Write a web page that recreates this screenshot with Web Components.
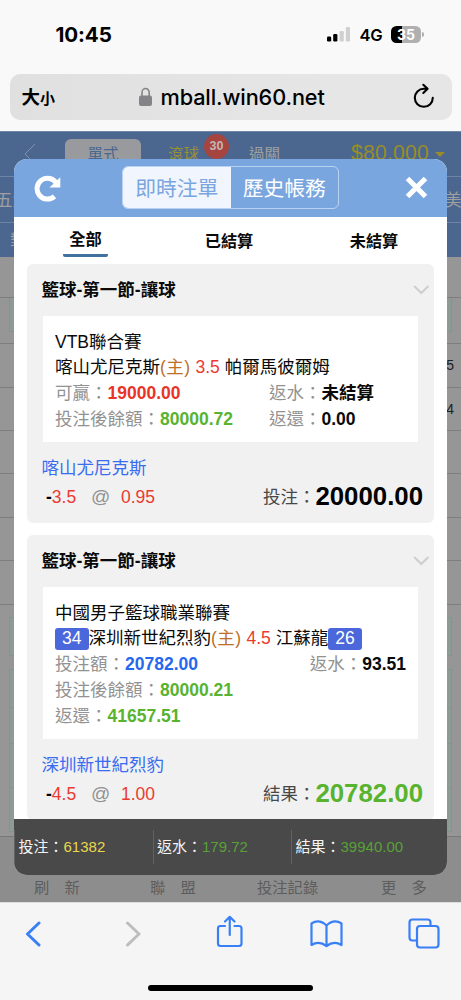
<!DOCTYPE html>
<html lang="zh-Hant">
<head>
<meta charset="utf-8">
<title>mball.win60.net</title>
<style>
html,body{margin:0;height:100%;overflow:hidden}
body{font-family:"Liberation Sans","Noto Sans CJK TC",sans-serif;background:#f9f9f9;color:#0a0a0a}
</style>
</head>
<body>
<phone-screen></phone-screen>
<script>
function define(name, html, after) {
  const t = document.createElement('template');
  t.innerHTML = '<style>*{box-sizing:border-box}:host{display:block;box-sizing:border-box}</style>' + html;
  customElements.define(name, class extends HTMLElement {
    constructor() {
      super();
      this.attachShadow({mode: 'open'}).append(t.content.cloneNode(true));
    }
    connectedCallback() { if (after) after(this, this.shadowRoot); }
  });
}

define('status-bar', `
<style>
:host{height:74px;display:flex;align-items:flex-start;padding:22px 37.5px 0 55.5px;font-family:Inter,sans-serif;color:#000}
.time{font-weight:700;font-size:20.6px;line-height:25px;letter-spacing:-.1px;flex:1}
.sig{margin:5px 8px 0 0}.net{font-size:16.6px;font-weight:600;line-height:26px;margin-right:8.5px;letter-spacing:-.2px}
.bat{display:flex;align-items:center;margin-top:4px}
.body{width:30px;height:17px;border-radius:5.5px;background:linear-gradient(90deg,#000 10.5px,#b0b0b0 10.5px);color:#fff;font-weight:700;font-size:14px;line-height:17px;text-align:center}
.tip{width:1.5px;height:5px;border-radius:0 2px 2px 0;background:#b0b0b0;margin-left:1px}
</style>
<span class="time">10:45</span>
<svg class="sig" width="24" height="15" viewBox="0 0 24 15"><rect x="0" y="9.5" width="4.2" height="5" rx="1.2"/><rect x="6.2" y="7" width="4.2" height="7.500" rx="1.2"/><rect x="12.6" y="4" width="4.2" height="10.5" rx="1.2" fill="#d0d0d0"/><rect x="18.8" y="0" width="4.2" height="14.5" rx="1.2" fill="#d0d0d0"/></svg>
<span class="net">4G</span><span class="bat"><span class="body">35</span><span class="tip"></span></span>`);

define('address-bar', `
<style>
:host{height:57px;padding:0 9px 0 9.5px}
.bar{height:45.5px;border-radius:10px;background:linear-gradient(90deg,#e0e0e0,#e6e6e6 75%);display:flex;align-items:center;color:#000;padding:0 17px 0 12px}
.size{width:116px;font:700 18.5px/44px "Noto Sans CJK TC",sans-serif}
.size small{font-size:15px}
.url{font:500 21.7px/44px Inter,sans-serif;margin-left:8px;flex:1;letter-spacing:-.12px}
</style>
<div class="bar"><span class="size">大<small>小</small></span>
<svg width="14" height="20" viewBox="0 0 14 20" style="margin-left:1px"><rect x="0" y="8.5" width="13" height="10.5" rx="2" fill="#848488"/><path d="M3 9V5.5a3.6 4 0 0 1 7.2 0V9" fill="none" stroke="#848488" stroke-width="1.6"/></svg>
<span class="url">mball.win60.net</span>
<svg width="22" height="26" viewBox="0 0 22 26" fill="none" stroke="#000" stroke-width="2.1" stroke-linecap="round" stroke-linejoin="round" style="margin-top:-2px"><path d="M19.8 14.8A9 9 0 1 1 10.8 5.8h3.7M10.3 1.8l4.3 4-4.3 4.2"/></svg></div>`);

define('app-backdrop', `
<style>
:host{height:771px;background:#969696;border-top:1px solid #6d87a5;overflow:hidden;display:flex;flex-direction:column;color:#a0a0a0}
.nav{background:#4b678f;height:125px;flex:none}
.top{height:45px;display:flex;border-bottom:1px solid #6d84a6;align-items:flex-start;font-size:15.5px}
.top>*{flex:none}
.back{margin:11px 0 0 24px}.on{width:76px;height:40px;background:#989a9d;border-radius:6px;margin:7px 0 0 29px;text-align:center;line-height:31px;color:#4b678f}
.live{margin:11px 0 0 27px;color:#988f32;width:36px;line-height:24px}
.n{width:25px;height:25px;border-radius:50%;background:#a6443f;color:#c4b6b6;font:700 12.5px/25px "Liberation Sans";text-align:center;margin:2px 0 0 0}
.pass{margin:11px 0 0 20px;line-height:24px}.cash{font-size:21.2px;line-height:24px;color:#988d28;margin:8.500px 0 0 71px;letter-spacing:.2px}
.tri{margin:20px 0 0 6px;border:5px solid transparent;border-top-color:#988d28}
.mid{height:46px;border-bottom:1px solid #6d84a6;display:flex;justify-content:space-between;font-size:16.5px;line-height:46px;white-space:nowrap}
.mid span:first-child{margin-left:-4px}.mid span:last-child{width:16px}
.low{font-size:15px;line-height:34px;padding-left:10px}
.row{flex:none;border-bottom:1px solid #7e7e7e;text-align:right;padding-right:7px;color:#202020;font-size:14px}
.box{flex:none;margin:0 9px;border:1.5px solid #7b998e;background:#8d9a95}
.box i{display:block;border-bottom:1px solid #7b998e}
.foot{margin-top:4px;border-top:1px solid #787878;background:#8d8d8d;flex:1;padding-top:39px;display:flex;font-size:15.3px;line-height:24px;color:#5d5d5d;white-space:pre}
</style>
<div class="nav"><div class="top">
<svg class="back" width="12" height="22" viewBox="0 0 12 22" fill="none" stroke="#8193aa"><path d="M11 1 1 11l10 10"/></svg>
<span class="on">單式</span><span class="live">滾球</span><span class="n">30</span><span class="pass">過關</span><span class="cash">$80,000</span><i class="tri"></i></div>
<div class="mid"><span>五大</span><span>美足</span></div><div class="low">對</div></div>
<div class="row" style="height:41px"></div>
<div class="row" style="height:46px;padding:0"><div class="box" style="height:34px;border-top:0"></div></div>
<div class="row" style="height:44px;line-height:43px">5</div>
<div class="row" style="height:43px;line-height:43px">4</div>
<div class="row" style="height:43px"></div><div class="row" style="height:44px"></div><div class="row" style="height:43px"></div><div class="row" style="height:44px"></div>
<div class="box" style="height:39px;margin-top:12px"></div>
<div class="box" style="height:163px;margin-top:13px"><i style="height:38px"></i><i style="height:36px"></i><i style="height:44px"></i></div>
<div class="foot"><span style="width:116px;padding-left:34px">刷&#12288;新</span><span style="width:141px;padding-left:34px">聯&#12288;盟</span><span style="width:124px">投注記錄</span><span>更&#12288;多</span></div>`);

define('bet-head', `
<style>
:host{height:58px;background:#7aa6df;display:grid;grid-template-columns:108px 217px 1fr;align-items:center;color:#fff}
.re{margin:0 0 0 20px}.seg{height:43px;border:1px solid #b9d2ef;border-radius:6px;display:flex;font-size:20.8px;line-height:43px;text-align:center;overflow:hidden}
.seg span{flex:1}.seg span:first-child{background:#f1f5fd;color:#7aa6df}.x{justify-self:end;margin-right:19px}
</style>
<svg class="re" width="28" height="28" viewBox="0 0 28 28"><path d="M20.500 22.300A10.400 10.400 0 1 1 22.500 9.500" fill="none" stroke="#fff" stroke-width="5"/><path d="M26.300 3.200v10.300H15.500z" fill="#fff"/></svg>
<div class="seg"><span>即時注單</span><span>歷史帳務</span></div>
<svg class="x" width="23" height="23" viewBox="0 0 23 23" stroke="#fff" stroke-width="5"><path d="m2.500 2.500 18 18M20.500 2.500 2.500 20.500"/></svg>`);

define('bet-tabs', `
<style>
:host{height:47px;display:grid;grid-template-columns:143px 144px 146px;justify-items:center;font-weight:700;font-size:16.2px;line-height:26px}
span{margin-top:11px}.on{margin-top:8px;height:32.500px;width:44.5px;text-align:center;line-height:28px;border-bottom:3.5px solid #41719f;border-radius:0 0 2px 2px}
</style><span class="on">全部</span><span>已結算</span><span>未結算</span>`);

define('bet-card', `
<style>
:host{width:407px;background:#f1f1f1;border-radius:6px;margin:0 0 12px 13px;padding:0 16px 0 15px;font-size:17.5px}
.t{height:52px;display:flex;align-items:center;justify-content:space-between;font-weight:700;margin:0 -12px 0 -.5px;line-height:52px;padding-top:1px}
.t svg{margin-top:-1px}
.b{background:#fff;margin-left:1px;padding:14px 12px 9.5px;line-height:25.8px}
.f{display:flex;flex-wrap:wrap;justify-content:space-between;align-content:flex-start;height:80.500px;padding-top:13px;line-height:26px;margin:0 -5px 0 -.5px}
::slotted([slot=team]){width:100%;height:29px;color:#3a6cf0}
</style>
<div class="t"><slot name="title"></slot><svg width="17" height="12" viewBox="0 0 17 12" fill="none" stroke="#cecece" stroke-width="2"><path d="m1.200 2 7.100 7 7.100-7"/></svg></div>
<div class="b"><slot></slot></div>
<div class="f"><slot name="team"></slot><slot name="odds"></slot><slot name="sum"></slot></div>`);

define('bet-line', `<style>
:host{display:flex;white-space:pre;height:25.8px}
.r{margin-left:auto}
</style><slot></slot><span class="r"><slot name="right"></slot></span>`);

define('bet-tag', `<style>:host{background:#4a68db;color:#fff;width:33.5px;height:21.5px;border-radius:3px;text-align:center;line-height:21.5px;margin-top:2px}</style><slot></slot>`);

define('lab-val', `<style>
:host{display:inline-flex;color:#929292;white-space:nowrap}
b{color:var(--c,#0a0a0a)}
</style><slot></slot><b></b>`, (el, r) => { r.querySelector('b').textContent = el.getAttribute('value'); });

define('bet-odds', `<style>
:host{display:flex;padding-left:4.5px;color:#eb3b30;white-space:nowrap}
b{color:#000}.h{width:45px}.at{color:#929292;font-size:19px;width:30px}
</style><span class="h"><b>-</b><span class="v"></span></span><span class="at">@</span><span class="o"></span>`, (el, r) => {
  r.querySelector('.v').textContent = el.getAttribute('line');
  r.querySelector('.o').textContent = el.getAttribute('odds');
});

define('bet-sum', `<style>
:host{display:flex;justify-content:flex-end;color:#484848;white-space:nowrap}
b{font-size:25.8px;line-height:24px;color:var(--c,#000)}
</style><slot></slot><b></b>`, (el, r) => { r.querySelector('b').textContent = el.getAttribute('value'); });

define('bet-total', `<style>
:host{height:56px;background:#494949;color:#f4f4f4;display:grid;grid-template-columns:138.500px 138.500px 1fr;font-size:15px;line-height:34px;padding-top:11px}
div{height:34px;padding-left:3.500px;border-left:1px solid #626262}div:first-child{border:0;padding-left:4px}
b{font-weight:400;color:#58a137}.y{color:#ead74b}
</style><div>投注：<b class="y">61382</b></div><div>返水：<b>179.72</b></div><div>結果：<b>39940.00</b></div>`);

define('bet-dialog', `
<style>
:host{display:flex;flex-direction:column;width:433px;height:716.5px;background:#fff;border-radius:13px;overflow:hidden}
.list{flex:1;overflow:hidden}
.g{--c:#58b32f}.red{--c:#e93427}.blu{--c:#2667ef}
.home{color:#bd7027;letter-spacing:.5px}.n{color:#eb3b30}
</style>
<bet-head></bet-head><bet-tabs></bet-tabs>
<div class="list">
<bet-card><span slot="title">籃球-第一節-讓球</span>
<bet-line>VTB聯合賽</bet-line>
<bet-line>喀山尤尼克斯<span class="home">(主)</span><span class="n">&nbsp;3.5</span>&nbsp;帕爾馬彼爾姆</bet-line>
<bet-line><lab-val class="red" value="19000.00" style="width:214px">可贏：</lab-val><lab-val value="未結算">返水：</lab-val></bet-line>
<bet-line><lab-val class="g" value="80000.72" style="width:214px">投注後餘額：</lab-val><lab-val value="0.00">返還：</lab-val></bet-line>
<span slot="team">喀山尤尼克斯</span><bet-odds slot="odds" line="3.5" odds="0.95"></bet-odds><bet-sum slot="sum" value="20000.00">投注：</bet-sum></bet-card>
<bet-card><span slot="title">籃球-第一節-讓球</span>
<bet-line>中國男子籃球職業聯賽</bet-line>
<bet-line><bet-tag>34</bet-tag>深圳新世紀烈豹<span class="home">(主)</span><span class="n">&nbsp;4.5</span>&nbsp;江蘇龍<bet-tag>26</bet-tag></bet-line>
<bet-line><lab-val class="blu" value="20782.00">投注額：</lab-val><lab-val slot="right" value="93.51">返水：</lab-val></bet-line>
<bet-line><lab-val class="g" value="80000.21">投注後餘額：</lab-val></bet-line>
<bet-line><lab-val class="g" value="41657.51">返還：</lab-val></bet-line>
<span slot="team">深圳新世紀烈豹</span><bet-odds slot="odds" line="4.5" odds="1.00"></bet-odds><bet-sum slot="sum" class="g" value="20782.00">結果：</bet-sum></bet-card>
</div>
<bet-total></bet-total>`);

define('safari-toolbar', `
<style>
:host{height:98px;background:#f5f5f5;border-top:1px solid #dedede}
.i{display:flex;justify-content:space-between;align-items:center;height:62px;padding:0 21.500px 0 25px}
svg{fill:none;stroke:#397ff5;stroke-width:2.2;stroke-linecap:round;stroke-linejoin:round}
.c{stroke-width:3}
.h{width:165px;height:6px;border-radius:3px;background:#000;margin:20px auto 0}
</style>
<div class="i">
<svg class="c" width="16" height="26" viewBox="0 0 16 26"><path d="M14 2 2.500 13 14 24"/></svg>
<svg class="c" width="16" height="26" viewBox="0 0 16 26" style="stroke:#bdbdbd;margin-left:32px"><path d="m2.500 2 11.500 11L2.500 24"/></svg>
<svg width="28" height="34" viewBox="0 0 28 34" style="margin:-4px 0 0 23px"><path d="M9 11H4.500q-2.500 0-2.500 2.500v15q0 2.500 2.500 2.500h18.500q2.500 0 2.500-2.500v-15q0-2.500-2.500-2.500H18.500M13.750 20V2M9 6.500 13.750 1.800 18.500 6.500"/></svg>
<svg width="33" height="28" viewBox="0 0 33 28" style="margin-left:14px"><path d="M16.500 26V5.500Q9-1.500 1.500 3.500V25Q9 20.500 16.500 26 24 20.500 31.500 25V3.500Q24-1.500 16.500 5.500"/></svg>
<svg width="32" height="31" viewBox="0 0 32 31" style="margin:-1px 0 0 13px"><path d="M8.500 22.500H4.500Q1.500 22.500 1.500 19.500V4.500Q1.500 1.500 4.500 1.500H19.500Q22.500 1.500 22.500 4.500V7.500"/><rect x="9" y="8" width="21.500" height="21.500" rx="3"/></svg>
</div><div class="h"></div>`);

define('phone-screen', `
<style>
:host{width:461px;height:1000px;position:relative}
bet-dialog{position:absolute;left:14px;top:158.500px}
</style>
<status-bar></status-bar><address-bar></address-bar><app-backdrop></app-backdrop><safari-toolbar></safari-toolbar><bet-dialog></bet-dialog>`);
</script>
</body>
</html>
